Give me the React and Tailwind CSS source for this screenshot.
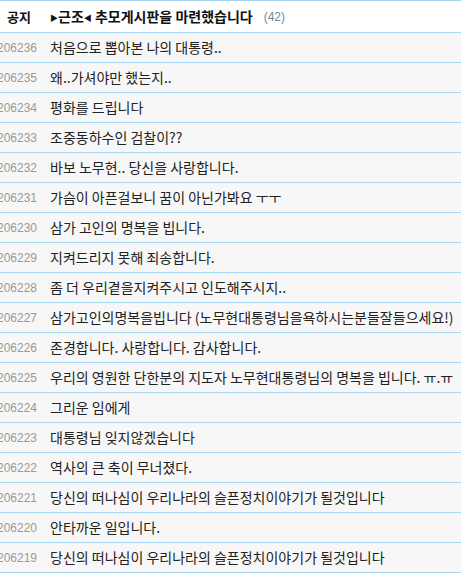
import React from "react";

const posts = [
  { id: 206236, title: "처음으로 뽑아본 나의 대통령.." },
  { id: 206235, title: "왜..가셔야만 했는지.." },
  { id: 206234, title: "평화를 드립니다" },
  { id: 206233, title: "조중동하수인 검찰이??" },
  { id: 206232, title: "바보 노무현.. 당신을 사랑합니다." },
  { id: 206231, title: "가슴이 아픈걸보니 꿈이 아닌가봐요 ㅜㅜ" },
  { id: 206230, title: "삼가 고인의 명복을 빕니다." },
  { id: 206229, title: "지켜드리지 못해 죄송합니다." },
  { id: 206228, title: "좀 더 우리곁을지켜주시고 인도해주시지.." },
  { id: 206227, title: "삼가고인의명복을빕니다 (노무현대통령님을욕하시는분들잘들으세요!)" },
  { id: 206226, title: "존경합니다. 사랑합니다. 감사합니다." },
  { id: 206225, title: "우리의 영원한 단한분의 지도자 노무현대통령님의 명복을 빕니다. ㅠ.ㅠ" },
  { id: 206224, title: "그리운 임에게" },
  { id: 206223, title: "대통령님 잊지않겠습니다" },
  { id: 206222, title: "역사의 큰 축이 무너졌다." },
  { id: 206221, title: "당신의 떠나심이 우리나라의 슬픈정치이야기가 될것입니다" },
  { id: 206220, title: "안타까운 일입니다." },
  { id: 206219, title: "당신의 떠나심이 우리나라의 슬픈정치이야기가 될것입니다" },
];

const font = { fontFamily: "'Noto Sans CJK KR', 'Liberation Sans', sans-serif" };

const App = () => {
  return (
    <div
      className="w-[461px] h-[573px] overflow-hidden bg-white border-t border-[#a6d6f4] text-[14px] text-[#222]"
      style={font}
    >
      {/* Notice row */}
      <div className="flex items-center h-[32px] border-b border-[#a6d6f4] bg-white">
        <div className="w-[44px] shrink-0 pl-[7px] font-bold text-[13px] text-[#111]">공지</div>
        <div className="pl-[6px] flex items-center whitespace-nowrap">
          <span className="font-bold text-[#111]">
            <span className="text-[8px] align-middle">▶</span>근조<span className="text-[8px] align-middle">◀</span> 추모게시판을 마련했습니다
          </span>
          <span
            className="ml-[11px] text-[12px] text-[#7b8796]"
            style={{ fontFamily: "'Liberation Sans', sans-serif" }}
          >
            (42)
          </span>
        </div>
      </div>

      {/* Post rows */}
      {posts.map((post) => (
        <div
          key={post.id}
          className="flex items-center h-[30px] border-b border-[#a6d6f4] bg-[#f7f7f7]"
        >
          <div
            className="w-[44px] shrink-0 flex justify-end pr-[7px] text-[12px] text-[#999] whitespace-nowrap"
            style={{ fontFamily: "'Liberation Sans', sans-serif" }}
          >
            {post.id}
          </div>
          <div className="pl-[6px] whitespace-nowrap">{post.title}</div>
        </div>
      ))}
    </div>
  );
};

export default App;
